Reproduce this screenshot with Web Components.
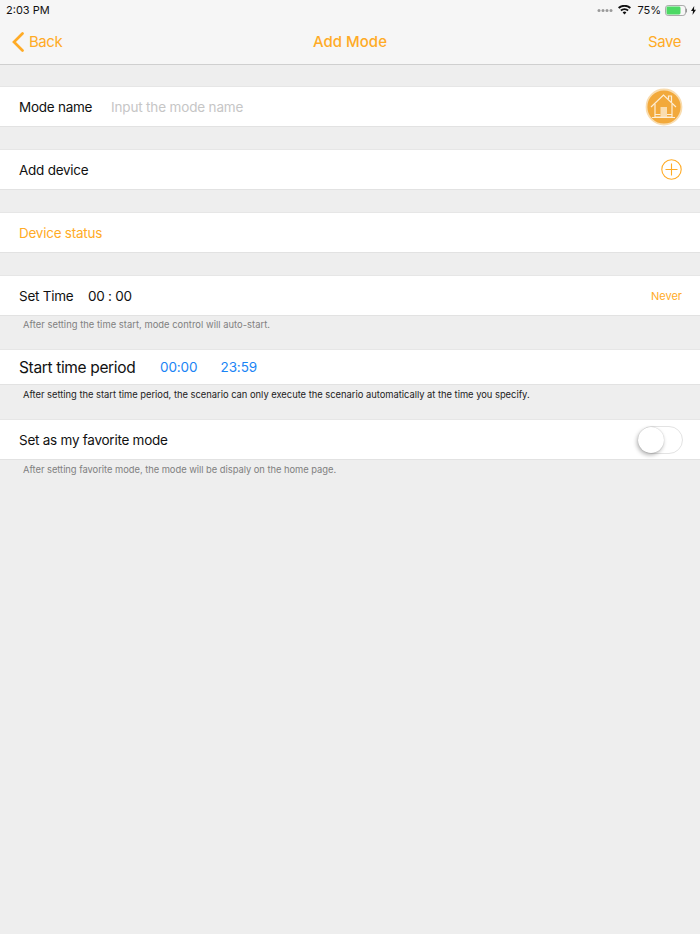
<!DOCTYPE html>
<html><head><meta charset="utf-8"><style>
html,body{margin:0;padding:0;background:#eeeeee;font-family:Inter,"Liberation Sans",sans-serif;}
body{width:700px;height:934px;overflow:hidden;display:flex;flex-direction:column}
</style></head><body>
<template id="t-bar"><style>
:host{display:block;background:#f6f6f6;height:64px;border-bottom:1px solid #cfcfcf;box-sizing:content-box;color:#ffab26}
.status{height:20px;display:flex;align-items:center;justify-content:space-between;padding:0 4px 0 6px;color:#111;font-size:11px}
.right{display:flex;align-items:center}
.nav{height:43px;display:grid;grid-template-columns:1fr auto 1fr;align-items:center;font-size:15px;letter-spacing:-.45px}
.back{display:flex;align-items:center;gap:5px;padding-left:12px}
.title{font-weight:500;letter-spacing:0}
.save{justify-self:end;padding-right:19px}
.pct{margin:0 4px 0 6px;font-size:11px}
</style>
<div class="status"><span>2:03 PM</span><span class="right">
<svg width="16" height="4" viewBox="0 0 16 4" style="margin-right:5px"><g fill="#9a9a9a"><circle cx="2" cy="2.4" r="1.5"/><circle cx="6" cy="2.4" r="1.5"/><circle cx="10" cy="2.4" r="1.5"/><circle cx="14" cy="2.4" r="1.5"/></g></svg>
<svg width="13" height="10" viewBox="0 0 13 10"><path d="M6.5 9.6 4.6 7.4a2.8 2.8 0 0 1 3.8 0zM3.5 6.2 2.3 4.8a6.4 6.4 0 0 1 8.4 0L9.500 6.200a4.600 4.600 0 0 0-6 0zM1.300 3.700 0 2.300a9.800 9.800 0 0 1 13 0l-1.300 1.400a8 8 0 0 0-10.400 0z" fill="#111"/></svg>
<span class="pct">75%</span>
<svg width="22" height="11" viewBox="0 0 22 11"><rect x=".5" y=".5" width="20" height="10" rx="2.600" fill="none" stroke="#aaa"/><rect x="1.500" y="1.500" width="14" height="8" rx="1.400" fill="#4cd964"/><rect x="21" y="3.500" width="1" height="4" rx=".5" fill="#999"/></svg>
<svg width="5" height="9" viewBox="0 0 5 9" style="margin-left:4px"><path d="M3.200 0 0 5h2L1.500 9 5 3.700H3z" fill="#111"/></svg>
</span></div>
<div class="nav"><span class="back"><svg width="12" height="20" viewBox="0 0 12 20"><path d="M10.500 1.500 2 10l8.500 8.500" fill="none" stroke="#ffab26" stroke-width="2.700" stroke-linecap="round"/></svg><span>Back</span></span><span class="title">Add Mode</span><span class="save">Save</span></div>
</template>

<template id="t-row"><style>
:host{display:flex;align-items:center;box-sizing:border-box;background:#fff;height:var(--h,41px);padding:0 18px 0 19px;border-top:1px solid #e6e6e6;border-bottom:1px solid #e2e2e2;font-size:13.500px;letter-spacing:-.25px;color:#111}
.s{flex:1;display:flex;align-items:center;min-width:0}
</style><div class="s"><slot></slot></div><slot name="end"></slot></template>

<template id="t-note"><style>
:host{display:block;box-sizing:border-box;padding-left:23px;font-size:9.400px;line-height:12px;color:#808080;letter-spacing:-.02px}
:host([dark]){color:#222}
</style><slot></slot></template>

<template id="t-toggle"><style>
:host{display:block;position:relative;width:46px;height:28px;margin-right:-1px}
.t{position:absolute;left:1px;top:0;width:45px;height:28px;box-sizing:border-box;border:1.500px solid #e3e3e3;border-radius:14px;background:#fff}
.k{position:absolute;left:1px;top:1px;width:26px;height:26px;border-radius:50%;background:#fff;box-shadow:-1px 2px 4px rgba(0,0,0,.3),0 0 1px rgba(0,0,0,.25)}
</style><div class="t"></div><div class="k"></div></template>

<template id="t-screen"><style>
:host{display:flex;flex-direction:column;flex:1}
.g1{height:21px}.g2{height:22px}
</style>
<div class="g1"></div>
<mode-row><span style="width:92px">Mode name</span><span style="color:#c6c6c6;letter-spacing:-.16px">Input the mode name</span>
<svg slot="end" width="38" height="38" viewBox="0 0 38 38" style="margin-right:-1px"><circle cx="19" cy="19" r="17.500" fill="#f2a93b" stroke="#f9dcae" stroke-width="1.800"/><g fill="none" stroke="#fdeed6" stroke-width="1.200"><path d="M6 19 18.500 7 31 19"/><path d="M10 16v13h17V16"/><path d="M23.500 11V8h3v6"/><path d="M7 29.500h23M10 26.500h5.500M22 26.500h5"/></g><rect x="15.500" y="19" width="6.500" height="10" fill="#fbe6c4" opacity=".85"/></svg></mode-row>
<div class="g2"></div>
<mode-row>Add device
<svg slot="end" width="21" height="21" viewBox="0 0 21 21"><circle cx="10.500" cy="10.500" r="9.700" fill="none" stroke="#ffab26" stroke-width="1.100"/><path d="M4.500 10.500h12M10.500 4.500v12" stroke="#ffab26" stroke-width="1.100"/></svg></mode-row>
<div class="g2"></div>
<mode-row style="color:#ffab26">Device status</mode-row>
<div class="g2"></div>
<mode-row><span style="width:69px">Set Time</span><span>00 : 00</span><span slot="end" style="font-size:11px;letter-spacing:0;color:#ffab26">Never</span></mode-row>
<mode-note style="height:33px;padding-top:3px;letter-spacing:.03px">After setting the time start, mode control will auto-start.</mode-note>
<mode-row style="--h:36px;font-size:15.500px;letter-spacing:-.35px"><span style="width:141px">Start time period</span><span style="width:60.500px;font-size:13.500px;letter-spacing:-.1px;color:#1a84f5">00:00</span><span style="font-size:13.500px;letter-spacing:-.1px;color:#1a84f5">23:59</span></mode-row>
<mode-note dark style="height:34px;padding-top:4px">After setting the start time period, the scenario can only execute the scenario automatically at the time you specify.</mode-note>
<mode-row>Set as my favorite mode<mode-toggle slot="end"></mode-toggle></mode-row>
<mode-note style="padding-top:4px;letter-spacing:-.04px">After setting favorite mode, the mode will be dispaly on the home page.</mode-note>
</template>

<mode-bar></mode-bar>
<mode-screen></mode-screen>
<script>
for(const [n,id] of [['mode-bar','t-bar'],['mode-row','t-row'],['mode-note','t-note'],['mode-toggle','t-toggle'],['mode-screen','t-screen']]){
customElements.define(n,class extends HTMLElement{constructor(){super();this.attachShadow({mode:'open'}).appendChild(document.getElementById(id).content.cloneNode(true));}});
}
</script>
</body></html>
